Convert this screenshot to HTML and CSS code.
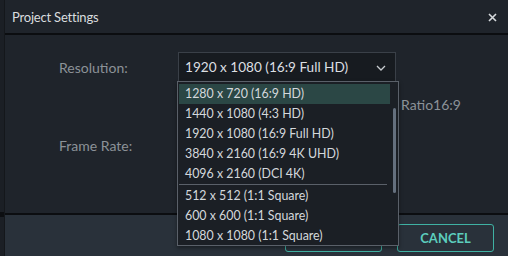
FILE: index.html
```html
<!DOCTYPE html>
<html>
<head>
<meta charset="utf-8">
<link rel="stylesheet" href="styles.css">
</head>
<body>
<div class="app">
  <div class="strip"><div class="strip-mark"></div></div>
  <div class="dialog">
    <div class="header">
      <span class="title">Project Settings</span>
      <svg class="close" width="9" height="9" viewBox="0 0 9 9"><path d="M1 1 L8 8 M8 1 L1 8" stroke="#d6dadd" stroke-width="1.6" fill="none"/></svg>
    </div>
    <div class="body">
      <div class="row row-res">
        <span class="label">Resolution:</span>
        <div class="select">
          <span class="select-text">1920 x 1080 (16:9 Full HD)</span>
          <svg class="chev" width="10" height="6" viewBox="0 0 10 6"><path d="M1 1 L5 5 L9 1" fill="none" stroke="#c8ccd0" stroke-width="1.3"/></svg>
          <div class="menu">
            <div class="list">
              <div class="item active">1280 x 720 (16:9 HD)</div>
              <div class="item">1440 x 1080 (4:3 HD)</div>
              <div class="item">1920 x 1080 (16:9 Full HD)</div>
              <div class="item">3840 x 2160 (16:9 4K UHD)</div>
              <div class="item">4096 x 2160 (DCI 4K)</div>
              <div class="sep"></div>
              <div class="item">512 x 512 (1:1 Square)</div>
              <div class="item">600 x 600 (1:1 Square)</div>
              <div class="item">1080 x 1080 (1:1 Square)</div>
            </div>
            <div class="scroll"><div class="thumb"></div></div>
          </div>
        </div>
      </div>
      <div class="ratio">Ratio16:9</div>
      <div class="row row-fps">
        <span class="label">Frame Rate:</span>
      </div>
    </div>
    <div class="footer">
      <button class="btn">OK</button>
      <button class="btn">CANCEL</button>
    </div>
  </div>
</div>
</body>
</html>
```
FILE: styles.css
```css
* { box-sizing: border-box; }
html, body { margin: 0; padding: 0; }
body {
  width: 508px;
  height: 256px;
  overflow: hidden;
  background: #1f242b;
  font-family: Lato, "Open Sans", sans-serif;
}
.app {
  display: flex;
  height: 256px;
}
.strip {
  width: 5px;
  background: #1b1f25;
  border-right: 1px solid #14171b;
  display: flex;
  flex-direction: column;
  justify-content: flex-end;
  padding-bottom: 39px;
}
.strip-mark {
  height: 5px;
  background: #0c0e11;
}
.dialog {
  flex: 1;
  display: flex;
  flex-direction: column;
}
.header {
  height: 35px;
  flex: none;
  display: flex;
  align-items: center;
  justify-content: space-between;
  padding: 0 11px 0 7px;
  border-bottom: 2px solid #0b0d10;
  background: #1f242b;
}
.title {
  color: #d9dcdf;
  font-size: 13px;
  letter-spacing: -0.2px;
}
.close {
  margin-top: 1px;
}
.body {
  flex: 1;
  background: #1f242b;
  padding-top: 17px;
  position: relative;
}
.row {
  display: flex;
  align-items: center;
}
.label {
  width: 173px;
  padding-left: 54px;
  color: #8c9298;
  font-size: 14px;
}
.select {
  position: relative;
  width: 218px;
  height: 30px;
  background: #171b20;
  border: 1px solid #3a4048;
  display: flex;
  align-items: center;
  justify-content: space-between;
  padding: 0 9px 0 6px;
  color: #dcdfe2;
  font-size: 13.6px;
}
.chev { margin-top: 1px; }
.menu {
  position: absolute;
  left: -2px;
  top: 28px;
  width: 222px;
  height: 165px;
  background: #1b1f25;
  border: 1px solid #5a6069;
  padding: 2px 1px 0 1px;
  display: flex;
  overflow: hidden;
  box-shadow: 0 2px 4px rgba(0,0,0,0.4);
}
.list {
  flex: 1;
  display: flex;
  flex-direction: column;
}
.item {
  height: 20px;
  flex: none;
  line-height: 20px;
  padding-left: 6px;
  font-size: 12.4px;
  color: #d4d8dc;
  white-space: nowrap;
}
.item.active { background: #2b4745; }
.sep {
  height: 1px;
  flex: none;
  background: #5a6069;
  margin: 0 3px 1px 0;
}
.scroll {
  width: 7px;
  flex: none;
  padding: 24px 1px 0 3px;
}
.thumb {
  width: 3px;
  height: 85px;
  background: #65707e;
  border-radius: 2px;
}
.ratio {
  position: absolute;
  left: 396px;
  top: 61px;
  color: #8c9298;
  font-size: 14px;
}
.row-fps {
  margin-top: 55px;
}
.footer {
  height: 43px;
  flex: none;
  background: #29313a;
  border-top: 2px solid #0b0d10;
  display: flex;
  align-items: center;
  justify-content: flex-end;
  gap: 15px;
  padding: 0 14px 1px 0;
}
.btn {
  width: 97px;
  height: 28px;
  background: transparent;
  border: 1px solid #3fb1a3;
  border-radius: 3px;
  color: #5ccdbd;
  font-family: Lato, "Open Sans", sans-serif;
  font-weight: bold;
  font-size: 13px;
  margin-top: 6px;
}
```
